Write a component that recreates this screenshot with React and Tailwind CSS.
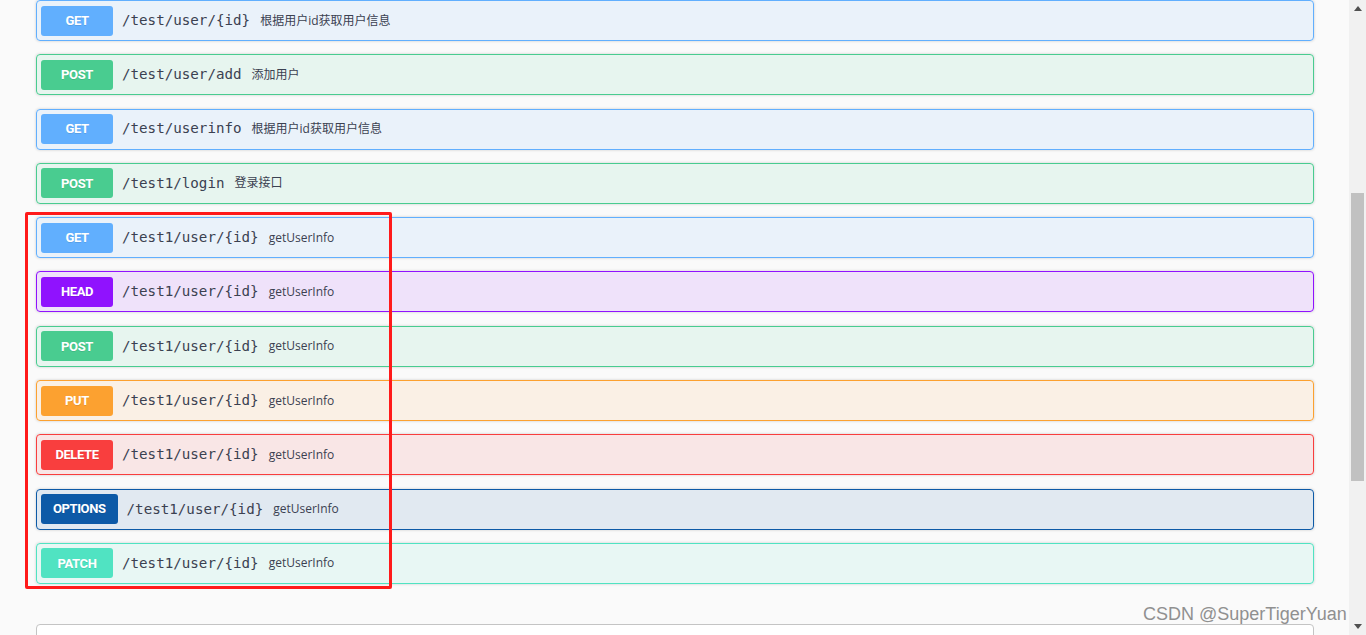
const ops = [
  { method: "GET", path: "/test/user/{id}", desc: "根据用户id获取用户信息", tone: "get" },
  { method: "POST", path: "/test/user/add", desc: "添加用户", tone: "post" },
  { method: "GET", path: "/test/userinfo", desc: "根据用户id获取用户信息", tone: "get" },
  { method: "POST", path: "/test1/login", desc: "登录接口", tone: "post" },
  { method: "GET", path: "/test1/user/{id}", desc: "getUserInfo", tone: "get" },
  { method: "HEAD", path: "/test1/user/{id}", desc: "getUserInfo", tone: "head" },
  { method: "POST", path: "/test1/user/{id}", desc: "getUserInfo", tone: "post" },
  { method: "PUT", path: "/test1/user/{id}", desc: "getUserInfo", tone: "put" },
  { method: "DELETE", path: "/test1/user/{id}", desc: "getUserInfo", tone: "delete" },
  { method: "OPTIONS", path: "/test1/user/{id}", desc: "getUserInfo", tone: "options" },
  { method: "PATCH", path: "/test1/user/{id}", desc: "getUserInfo", tone: "patch" },
];

const tones = {
  get: { box: "border-[#61affe] bg-[#61affe]/10", badge: "bg-[#61affe]" },
  post: { box: "border-[#49cc90] bg-[#49cc90]/10", badge: "bg-[#49cc90]" },
  head: { box: "border-[#9012fe] bg-[#9012fe]/10", badge: "bg-[#9012fe]" },
  put: { box: "border-[#fca130] bg-[#fca130]/10", badge: "bg-[#fca130]" },
  delete: { box: "border-[#f93e3e] bg-[#f93e3e]/10", badge: "bg-[#f93e3e]" },
  options: { box: "border-[#0d5aa7] bg-[#0d5aa7]/10", badge: "bg-[#0d5aa7]" },
  patch: { box: "border-[#50e3c2] bg-[#50e3c2]/10", badge: "bg-[#50e3c2]" },
};

function OpRow({ op }) {
  const t = tones[op.tone];
  return (
    <div
      className={`flex items-center h-[41px] mb-[13.3px] px-[4px] border rounded-[4px] shadow-[0_0_3px_rgba(0,0,0,0.19)] ${t.box}`}
    >
      <span
        className={`min-w-[72px] h-[30px] px-[12px] flex items-center justify-center rounded-[3px] text-white text-[13px] font-bold tracking-[-0.4px] font-['Roboto',sans-serif] [text-shadow:0_1px_0_rgba(0,0,0,0.1)] ${t.badge}`}
      >
        {op.method}
      </span>
      <span className="ml-[9px] text-[14.2px] text-[#3b4151] font-['DejaVu_Sans_Mono',monospace]">
        {op.path}
      </span>
      <span className="ml-[10px] text-[12px] text-[#3b4151] font-['Open_Sans','Noto_Sans_CJK_SC',sans-serif]">
        {op.desc}
      </span>
    </div>
  );
}

export default function App() {
  return (
    <div className="flex w-[1366px] h-[635px] overflow-hidden bg-[#fafafa]">
      <div className="relative flex-1">
        <div className="ml-[36px] w-[1278px]">
          {ops.map((op, i) => (
            <OpRow key={i} op={op} />
          ))}
          <div className="mt-[40px] h-[40px] border border-[#c4c4c4] rounded-[4px] bg-white"></div>
        </div>

        {/* annotation box */}
        <div className="absolute left-[25px] top-[212px] w-[367px] h-[377px] border-[3px] border-[#ff1a1a] rounded-[2px]"></div>

        {/* watermark */}
        <div className="absolute left-[1143px] top-[605px] text-[18px] leading-none text-[#909090] font-['Liberation_Sans',sans-serif] whitespace-nowrap">
          CSDN @SuperTigerYuan
        </div>
      </div>

      {/* scrollbar */}
      <div className="w-[17px] flex flex-col items-center bg-[#f1f1f1]">
        <div className="h-[17px] flex items-center justify-center">
          <svg width="8" height="5" viewBox="0 0 8 5">
            <path d="M0 5 L4 0 L8 5 Z" fill="#505050" />
          </svg>
        </div>
        <div className="flex-1 w-full px-[2px] pt-[176px]">
          <div className="h-[288px] w-full bg-[#c1c1c1]"></div>
        </div>
        <div className="h-[17px] flex items-center justify-center">
          <svg width="8" height="5" viewBox="0 0 8 5">
            <path d="M0 0 L8 0 L4 5 Z" fill="#505050" />
          </svg>
        </div>
      </div>
    </div>
  );
}
